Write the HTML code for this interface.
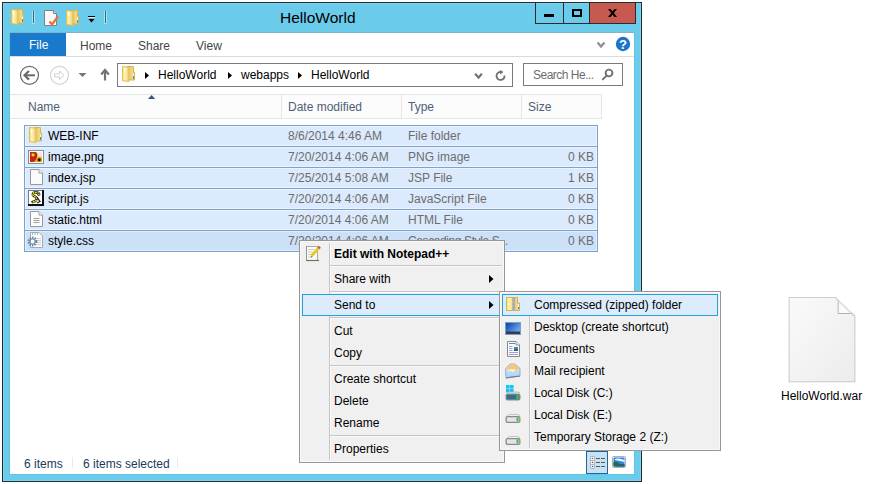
<!DOCTYPE html>
<html><head><meta charset="utf-8">
<style>
*{margin:0;padding:0;box-sizing:border-box}
html,body{width:878px;height:484px;background:#fff;overflow:hidden;font-family:"Liberation Sans",sans-serif;font-size:12px;color:#000}
.a{position:absolute}
.t{position:absolute;white-space:nowrap;line-height:14px}
#win{left:2px;top:2px;width:640px;height:480px;background:#6bcbea;border:1px solid #2b2b2b}
#content{left:10px;top:33px;width:624px;height:441px;background:#fff}
</style></head>
<body>
<svg width="0" height="0" style="position:absolute">
<defs>
<linearGradient id="gfront" x1="0" y1="0" x2="1" y2="0"><stop offset="0" stop-color="#f2da78"/><stop offset="0.35" stop-color="#fff4bc"/><stop offset="1" stop-color="#ecce68"/></linearGradient>
<linearGradient id="gback" x1="0" y1="0" x2="1" y2="0"><stop offset="0" stop-color="#e2c262"/><stop offset="1" stop-color="#f6e294"/></linearGradient>

</defs></svg>
<div id="win" class="a"></div>
<div class="a" style="left:3px;top:3px;width:638px;height:478px;border:1px solid #74d6f6"></div>
<div class="a" style="left:9px;top:32px;width:626px;height:443px;border:1px solid #5ec5e8"></div>
<div id="content" class="a"></div>
<div class="a" style="left:10px;top:32px;width:624px;height:1px;background:#7fb4cc"></div>

<!-- caption buttons -->
<div class="a" style="left:535px;top:3px;width:1px;height:21px;background:#2b2b2b"></div>
<div class="a" style="left:535px;top:23px;width:101px;height:1px;background:#2b2b2b"></div>
<div class="a" style="left:563px;top:3px;width:1px;height:21px;background:#2b2b2b"></div>
<div class="a" style="left:589px;top:3px;width:1px;height:21px;background:#2b2b2b"></div>
<div class="a" style="left:590px;top:3px;width:45px;height:20px;background:#c75a50"></div>
<div class="a" style="left:544px;top:14px;width:10px;height:3px;background:#000"></div>
<div class="a" style="left:572px;top:9px;width:10px;height:8px;border:2px solid #000"></div>
<div class="a" style="left:635px;top:3px;width:1px;height:21px;background:#2b2b2b"></div>
<svg class="a" style="left:607px;top:8px" width="12" height="11" viewBox="0 0 12 11"><path d="M1 1 H3.6 L5.5 3.6 L7.4 1 H10 L6.8 5 L10 9 H7.4 L5.5 6.4 L3.6 9 H1 L4.2 5 Z" fill="#000"/></svg>

<!-- title -->
<div class="t" style="left:280px;top:9px;font-size:15.5px;line-height:17px">HelloWorld</div>

<!-- QAT -->
<svg class="a" style="left:11px;top:9px" width="13" height="16" viewBox="0 0 13 16">
<path d="M5 0.5 H11.5 V6 H12.5 V14 H5 Z" fill="url(#gback)" stroke="#deb448" stroke-width="1"/>
<rect x="11" y="8" width="1" height="2" fill="#fff"/>
<rect x="11" y="10" width="1" height="3" fill="#2f93dd"/>
<path d="M0.5 0.5 L7 1.2 V15.5 L0.5 14.6 Z" fill="url(#gfront)" stroke="#e3bd4e" stroke-width="1"/>
<rect x="2" y="2" width="1.3" height="4" fill="#fff" opacity="0.9"/>
</svg>
<div class="a" style="left:32px;top:11px;width:3px;height:13px;background:#a6e2f4;border-radius:1px"></div>
<div class="a" style="left:33px;top:11px;width:1px;height:12px;background:#3a6878"></div>
<svg class="a" style="left:44px;top:10px" width="16" height="16" viewBox="0 0 16 16">
<path d="M0.5 0.5 H9.5 L12.5 3.5 V15.5 H0.5 Z" fill="#f8f8f8" stroke="#808080"/>
<path d="M9.5 0.5 V3.5 H12.5" fill="#e0e0e0" stroke="#808080"/>
<path d="M5.5 11.5 L8 14.5 L14 6.5" fill="none" stroke="#e8703a" stroke-width="2.2"/>
</svg>
<svg class="a" style="left:66px;top:10px" width="13" height="16" viewBox="0 0 13 16">
<path d="M5 0.5 H11.5 V6 H12.5 V14 H5 Z" fill="url(#gback)" stroke="#deb448" stroke-width="1"/>
<rect x="11" y="8" width="1" height="2" fill="#fff"/>
<rect x="11" y="10" width="1" height="3" fill="#2f93dd"/>
<path d="M0.5 0.5 L7 1.2 V15.5 L0.5 14.6 Z" fill="url(#gfront)" stroke="#e3bd4e" stroke-width="1"/>
<rect x="2" y="2" width="1.3" height="4" fill="#fff" opacity="0.9"/>
</svg>
<div class="a" style="left:88px;top:16px;width:7px;height:1px;background:#000"></div>
<div class="a" style="left:88px;top:17px;width:7px;height:1px;background:#bdeefd"></div>
<svg class="a" style="left:88px;top:19px" width="7" height="5" viewBox="0 0 7 5"><path d="M0.5 0 H6.5 L3.5 3.5 Z" fill="#000"/></svg>
<div class="a" style="left:104px;top:11px;width:3px;height:13px;background:#a6e2f4;border-radius:1px"></div>
<div class="a" style="left:105px;top:11px;width:1px;height:12px;background:#3a6878"></div>

<!-- ribbon tabs -->
<div class="a" style="left:10px;top:33px;width:56px;height:23px;background:#1979ca"></div>
<div class="t" style="left:29px;top:38px;color:#fff">File</div>
<div class="t" style="left:80px;top:39px;color:#444">Home</div>
<div class="t" style="left:138px;top:39px;color:#444">Share</div>
<div class="t" style="left:196px;top:39px;color:#444">View</div>
<div class="a" style="left:10px;top:56px;width:624px;height:1px;background:#dadbdc"></div>
<svg class="a" style="left:596px;top:41px" width="10" height="8" viewBox="0 0 10 8"><path d="M1.5 1.5 L5 5.5 L8.5 1.5" fill="none" stroke="#8e8e8e" stroke-width="2.2"/></svg>
<svg class="a" style="left:615px;top:36px" width="16" height="16" viewBox="0 0 16 16"><circle cx="8" cy="8" r="7.2" fill="#1a76c9"/><text x="8" y="12.6" text-anchor="middle" font-family="Liberation Sans" font-weight="bold" font-size="13" fill="#fff">?</text></svg>

<!-- nav -->
<svg class="a" style="left:19px;top:65px" width="21" height="21" viewBox="0 0 21 21"><circle cx="10.5" cy="10.3" r="9" fill="#fff" stroke="#6a6a6a" stroke-width="1.2"/><path d="M7 10.3 H16" stroke="#6a6a6a" stroke-width="2"/><path d="M10 6 L5.5 10.3 L10 14.6" fill="none" stroke="#6a6a6a" stroke-width="2.2"/></svg>
<svg class="a" style="left:49px;top:65px" width="21" height="21" viewBox="0 0 21 21"><circle cx="10.5" cy="10.3" r="9" fill="#fff" stroke="#d4d4d4" stroke-width="1.2"/><path d="M5.5 8.8 H10.5 V6 L15 10.3 L10.5 14.6 V11.8 H5.5 Z" fill="none" stroke="#d0d0d0" stroke-width="1"/></svg>
<svg class="a" style="left:78px;top:72px" width="9" height="6" viewBox="0 0 9 6"><path d="M0.5 1 H8.5 L4.5 5 Z" fill="#747474"/></svg>
<svg class="a" style="left:100px;top:68px" width="10" height="14" viewBox="0 0 10 14"><path d="M5 12.5 V2.5" stroke="#747474" stroke-width="2.2"/><path d="M1.2 6.5 L5 2 L8.8 6.5" fill="none" stroke="#747474" stroke-width="2.2"/></svg>
<div class="a" style="left:10px;top:94px;width:592px;height:1px;background:#e5e5e5"></div>

<!-- address -->
<div class="a" style="left:117px;top:63px;width:396px;height:24px;border:1px solid #7a7a7a;background:#fff"></div>
<svg class="a" style="left:122px;top:66px" width="13" height="16" viewBox="0 0 13 16">
<path d="M5 0.5 H11.5 V6 H12.5 V14 H5 Z" fill="url(#gback)" stroke="#deb448" stroke-width="1"/>
<rect x="11" y="8" width="1" height="2" fill="#fff"/>
<rect x="11" y="10" width="1" height="3" fill="#2f93dd"/>
<path d="M0.5 0.5 L7 1.2 V15.5 L0.5 14.6 Z" fill="url(#gfront)" stroke="#e3bd4e" stroke-width="1"/>
<rect x="2" y="2" width="1.3" height="4" fill="#fff" opacity="0.9"/>
</svg>
<svg class="a" style="left:145px;top:72px" width="5" height="7" viewBox="0 0 5 7"><path d="M0 0 L4 3.5 L0 7 Z" fill="#000"/></svg>
<div class="t" style="left:158px;top:68px">HelloWorld</div>
<svg class="a" style="left:228px;top:72px" width="5" height="7" viewBox="0 0 5 7"><path d="M0 0 L4 3.5 L0 7 Z" fill="#000"/></svg>
<div class="t" style="left:241px;top:68px">webapps</div>
<svg class="a" style="left:298px;top:72px" width="5" height="7" viewBox="0 0 5 7"><path d="M0 0 L4 3.5 L0 7 Z" fill="#000"/></svg>
<div class="t" style="left:311px;top:68px">HelloWorld</div>
<svg class="a" style="left:474px;top:72px" width="9" height="8" viewBox="0 0 9 8"><path d="M1.2 1.8 L4.5 5.6 L7.8 1.8" fill="none" stroke="#707070" stroke-width="2.2"/></svg>
<svg class="a" style="left:495px;top:70px" width="12" height="12" viewBox="0 0 12 12"><path d="M9.5 5.5 A4 4 0 1 1 6 2" fill="none" stroke="#707070" stroke-width="1.8"/><path d="M5 0 L8.5 2 L5 4.5 Z" fill="#707070"/></svg>
<div class="a" style="left:523px;top:63px;width:100px;height:23px;border:1px solid #7a7a7a;background:#fff"></div>
<div class="t" style="left:533px;top:68px;color:#6d6d6d;letter-spacing:-0.5px">Search He...</div>
<svg class="a" style="left:601px;top:68px" width="13" height="13" viewBox="0 0 13 13"><circle cx="8" cy="5" r="3.4" fill="none" stroke="#707070" stroke-width="1.9"/><path d="M5.6 7.6 L1.8 11.4" stroke="#707070" stroke-width="1.9" stroke-linecap="round"/></svg>

<!-- header -->
<div class="a" style="left:10px;top:95px;width:592px;height:24px;background:#fcfcfc"></div>
<div class="a" style="left:10px;top:118px;width:592px;height:1px;background:#e5e5e5"></div>
<div class="a" style="left:281px;top:95px;width:1px;height:23px;background:#e5e5e5"></div>
<div class="a" style="left:401px;top:95px;width:1px;height:23px;background:#e5e5e5"></div>
<div class="a" style="left:521px;top:95px;width:1px;height:23px;background:#e5e5e5"></div>
<div class="a" style="left:601px;top:95px;width:1px;height:23px;background:#e5e5e5"></div>
<svg class="a" style="left:148px;top:94px" width="8" height="6" viewBox="0 0 8 6"><path d="M0 5 L3.6 1 L7.2 5 Z" fill="#3c5478"/></svg>
<div class="t" style="left:28px;top:100px;color:#4c607a">Name</div>
<div class="t" style="left:288px;top:100px;color:#4c607a">Date modified</div>
<div class="t" style="left:408px;top:100px;color:#4c607a">Type</div>
<div class="t" style="left:528px;top:100px;color:#4c607a">Size</div>
<!-- rows -->
<div class="a" style="left:24px;top:125px;width:574px;height:22px;background:#dbeafc;border:1px solid #7da2ce;box-shadow:inset 0 0 0 1px rgba(255,255,255,0.45)"></div>
<div class="a" style="left:24px;top:146px;width:574px;height:22px;background:#dbeafc;border:1px solid #7da2ce;box-shadow:inset 0 0 0 1px rgba(255,255,255,0.45)"></div>
<div class="a" style="left:24px;top:167px;width:574px;height:22px;background:#dbeafc;border:1px solid #7da2ce;box-shadow:inset 0 0 0 1px rgba(255,255,255,0.45)"></div>
<div class="a" style="left:24px;top:188px;width:574px;height:22px;background:#dbeafc;border:1px solid #7da2ce;box-shadow:inset 0 0 0 1px rgba(255,255,255,0.45)"></div>
<div class="a" style="left:24px;top:209px;width:574px;height:22px;background:#dbeafc;border:1px solid #7da2ce;box-shadow:inset 0 0 0 1px rgba(255,255,255,0.45)"></div>
<div class="a" style="left:24px;top:230px;width:574px;height:22px;background:#cce0f8;border:1px solid #7da2ce;box-shadow:inset 0 0 0 1px rgba(255,255,255,0.45)"></div>
<svg class="a" style="left:29px;top:127px" width="13" height="16" viewBox="0 0 13 16">
<path d="M5 0.5 H11.5 V6 H12.5 V14 H5 Z" fill="url(#gback)" stroke="#deb448" stroke-width="1"/>
<rect x="11" y="8" width="1" height="2" fill="#fff"/>
<rect x="11" y="10" width="1" height="3" fill="#2f93dd"/>
<path d="M0.5 0.5 L7 1.2 V15.5 L0.5 14.6 Z" fill="url(#gfront)" stroke="#e3bd4e" stroke-width="1"/>
<rect x="2" y="2" width="1.3" height="4" fill="#fff" opacity="0.9"/>
</svg>
<div class="t" style="left:48px;top:129px">WEB-INF</div>
<div class="t" style="left:288px;top:129px;color:#6d6d6d">8/6/2014 4:46 AM</div>
<div class="t" style="left:408px;top:129px;color:#6d6d6d">File folder</div>
<svg class="a" style="left:28px;top:150px" width="16" height="14" viewBox="0 0 16 14"><rect x="0.5" y="0.5" width="15" height="13" fill="#fbfbfb" stroke="#8c8c8c"/><rect x="2" y="2" width="12" height="10" fill="#e6eedc"/><path d="M2 2 H8 L9.5 4.5 L9 9 L6 12 H2 Z" fill="#c42412"/><circle cx="5" cy="4.8" r="1.6" fill="#e0e020"/><path d="M7 12 L8.5 8 L11 6.5 L14 7 V12 Z" fill="#f2a20c"/><circle cx="11.2" cy="9.8" r="1.6" fill="#101010"/></svg>
<div class="t" style="left:48px;top:150px">image.png</div>
<div class="t" style="left:288px;top:150px;color:#6d6d6d">7/20/2014 4:06 AM</div>
<div class="t" style="left:408px;top:150px;color:#6d6d6d">PNG image</div>
<div class="t" style="left:494px;width:100px;text-align:right;top:150px;color:#6d6d6d">0 KB</div>
<svg class="a" style="left:30px;top:169px" width="13" height="16" viewBox="0 0 13 16"><path d="M0.5 0.5 H9 L12.5 4 V15.5 H0.5 Z" fill="#fbfbfb" stroke="#9a9a9a"/><path d="M9 0.5 V4 H12.5" fill="#fff" stroke="#9a9a9a"/></svg>
<div class="t" style="left:48px;top:171px">index.jsp</div>
<div class="t" style="left:288px;top:171px;color:#6d6d6d">7/25/2014 5:08 AM</div>
<div class="t" style="left:408px;top:171px;color:#6d6d6d">JSP File</div>
<div class="t" style="left:494px;width:100px;text-align:right;top:171px;color:#6d6d6d">1 KB</div>
<svg class="a" style="left:28px;top:190px" width="16" height="16" viewBox="0 0 16 16"><rect x="0" y="0" width="16" height="16" fill="#111"/><rect x="0" y="0" width="14" height="14" fill="#7a7a7a"/><rect x="1" y="1" width="13" height="13" fill="#fff"/><path d="M11 3.5 C8 1.5 4 2.5 5 5 C6 7 9.5 7 8.5 9.5 C7.5 12 5 11.5 3.5 12.5" fill="none" stroke="#222" stroke-width="2.6"/><path d="M11 3.5 C8 1.5 4 2.5 5 5 C6 7 9.5 7 8.5 9.5 C7.5 12 5 11.5 3.5 12.5" fill="none" stroke="#f4ec10" stroke-width="1.6" stroke-dasharray="1.6 0.8"/><path d="M9 7 L12 11.5 L9 13" fill="none" stroke="#222" stroke-width="1.3"/><circle cx="10.8" cy="4.3" r="1.2" fill="none" stroke="#222"/></svg>
<div class="t" style="left:48px;top:192px">script.js</div>
<div class="t" style="left:288px;top:192px;color:#6d6d6d">7/20/2014 4:06 AM</div>
<div class="t" style="left:408px;top:192px;color:#6d6d6d">JavaScript File</div>
<div class="t" style="left:494px;width:100px;text-align:right;top:192px;color:#6d6d6d">0 KB</div>
<svg class="a" style="left:30px;top:211px" width="13" height="16" viewBox="0 0 13 16"><path d="M0.5 0.5 H9 L12.5 4 V15.5 H0.5 Z" fill="#fbfbfb" stroke="#9a9a9a"/><path d="M9 0.5 V4 H12.5" fill="#fff" stroke="#9a9a9a"/><path d="M3.5 7.5 H9.5 M3.5 9.5 H9.5 M3.5 11.5 H9.5" stroke="#a0a0a0"/></svg>
<div class="t" style="left:48px;top:213px">static.html</div>
<div class="t" style="left:288px;top:213px;color:#6d6d6d">7/20/2014 4:06 AM</div>
<div class="t" style="left:408px;top:213px;color:#6d6d6d">HTML File</div>
<div class="t" style="left:494px;width:100px;text-align:right;top:213px;color:#6d6d6d">0 KB</div>
<svg class="a" style="left:27px;top:231px" width="17" height="18" viewBox="0 0 17 18"><path d="M3.5 1.5 H12 L15.5 5 V16.5 H3.5 Z" fill="#fbfbfb" stroke="#a8a8a8"/><path d="M5.5 2.5 V3.5 M8 2.5 V3.5 M10.5 2.5 V3.5" stroke="#5a7090" stroke-width="1"/><path d="M7.5 7.5 H14 M7.5 9.5 H14 M7.5 11.5 H14 M7.5 13.5 H14" stroke="#d0d0d0"/><circle cx="5.5" cy="10.5" r="3.6" fill="none" stroke="#6584a8" stroke-width="2.6" stroke-dasharray="1.4 0.9"/><circle cx="5.5" cy="10.5" r="2.6" fill="none" stroke="#7090b8" stroke-width="1"/><rect x="4.3" y="9.3" width="2.4" height="2.4" fill="#fff"/></svg>
<div class="t" style="left:48px;top:234px">style.css</div>
<div class="t" style="left:288px;top:234px;color:#6d6d6d">7/20/2014 4:06 AM</div>
<div class="t" style="left:408px;top:234px;color:#6d6d6d;letter-spacing:-0.4px">Cascading Style S...</div>
<div class="t" style="left:494px;width:100px;text-align:right;top:234px;color:#6d6d6d">0 KB</div>

<!-- status -->
<div class="t" style="left:24px;top:457px;color:#1e395b">6 items</div>
<div class="a" style="left:72px;top:457px;width:1px;height:11px;background:#e8e8e8"></div>
<div class="t" style="left:83px;top:457px;color:#1e395b">6 items selected</div>
<div class="a" style="left:177px;top:457px;width:1px;height:11px;background:#e8e8e8"></div>
<div class="a" style="left:586px;top:451px;width:22px;height:23px;background:#c6e2f6;border:1px solid #2d6290"></div>
<svg class="a" style="left:590px;top:456px" width="16" height="13" viewBox="0 0 16 13"><rect x="0.5" y="0.5" width="4" height="4" rx="0.8" fill="#fff" stroke="#9aa0a8" stroke-width="0.8"/><rect x="0.5" y="4.5" width="4" height="4" rx="0.8" fill="#fff" stroke="#9aa0a8" stroke-width="0.8"/><rect x="0.5" y="8.5" width="4" height="4" rx="0.8" fill="#fff" stroke="#9aa0a8" stroke-width="0.8"/><circle cx="2.5" cy="2.5" r="0.8" fill="#30a030"/><circle cx="2.5" cy="6.5" r="0.8" fill="#e02020"/><circle cx="2.5" cy="10.5" r="0.8" fill="#2050d0"/><path d="M6 2.5 H10 M11 2.5 H15 M6 6.5 H10 M11 6.5 H15 M6 10.5 H10 M11 10.5 H15" stroke="#5a5a5a" stroke-width="1"/></svg>
<svg class="a" style="left:612px;top:456px" width="14" height="12" viewBox="0 0 14 12"><rect x="0.5" y="0.5" width="13" height="11" rx="1" fill="#fff" stroke="#a8b0bc"/><rect x="1.5" y="1.5" width="11" height="9" fill="#2f86e0"/><path d="M3 3 Q7 1.5 12.5 4 V6 Q8 5 3 4 Z" fill="#eef8ff"/><path d="M1.5 6 Q5 5 8 8 L12.5 8 V10.5 H1.5 Z" fill="#2a6a3a"/><path d="M6 9 H12.5 V10.5 H4 Z" fill="#1a5ab0"/></svg>

<!-- desktop war file -->
<svg class="a" style="left:786px;top:295px" width="72" height="90" viewBox="0 0 72 90">
<defs><linearGradient id="gpage" x1="0" y1="0" x2="1" y2="1"><stop offset="0" stop-color="#fafafa"/><stop offset="1" stop-color="#ececec"/></linearGradient>
<filter id="blr" x="-10%" y="-10%" width="120%" height="120%"><feGaussianBlur stdDeviation="0.7"/></filter></defs>
<path d="M3.5 3 H49.5 L68.5 21 V86.5 H3.5 Z" fill="none" stroke="#bdbdbd" stroke-width="1.6" filter="url(#blr)"/>
<path d="M3.5 3 H49.5 L68.5 21 V86.5 H3.5 Z" fill="url(#gpage)"/>
<path d="M52.5 5.5 V18 H65.5" fill="none" stroke="#9a9a9a" stroke-width="1.4" filter="url(#blr)"/>
<path d="M52.5 5 V18 H66 Z" fill="#fbfbfb"/>
<path d="M50 3.5 L67.5 21" stroke="#d0d0d0" stroke-width="1"/>
</svg>
<div class="t" style="left:781px;top:389px">HelloWorld.war</div>

<!-- context menu -->
<div class="a" style="left:299px;top:240px;width:206px;height:223px;background:#f0f0f0;border:1px solid #979797"></div>
<div class="a" style="left:300px;top:241px;width:204px;height:221px;border:1px solid #f8f8f8"></div>
<div class="a" style="left:329px;top:243px;width:1px;height:217px;background:#c5c5c5"></div>
<div class="a" style="left:330px;top:243px;width:1px;height:217px;background:#fafafa"></div>
<div class="a" style="left:329px;top:265px;width:173px;height:1px;background:#c5c5c5"></div>
<div class="a" style="left:330px;top:266px;width:172px;height:1px;background:#fafafa"></div>
<div class="a" style="left:329px;top:291px;width:173px;height:1px;background:#c5c5c5"></div>
<div class="a" style="left:330px;top:292px;width:172px;height:1px;background:#fafafa"></div>
<div class="a" style="left:329px;top:317px;width:173px;height:1px;background:#c5c5c5"></div>
<div class="a" style="left:330px;top:318px;width:172px;height:1px;background:#fafafa"></div>
<div class="a" style="left:329px;top:365px;width:173px;height:1px;background:#c5c5c5"></div>
<div class="a" style="left:330px;top:366px;width:172px;height:1px;background:#fafafa"></div>
<div class="a" style="left:329px;top:435px;width:173px;height:1px;background:#c5c5c5"></div>
<div class="a" style="left:330px;top:436px;width:172px;height:1px;background:#fafafa"></div>
<div class="a" style="left:302px;top:294px;width:200px;height:22px;background:#dcecfc;border:1px solid #26a0da"></div>
<svg class="a" style="left:305px;top:245px" width="17" height="17" viewBox="0 0 17 17"><path d="M1.5 1.5 H12.5 V15.5 H1.5 Z" fill="#fafaf6" stroke="#a8a8a8"/><path d="M1 15.5 H14" stroke="#707070" stroke-width="1.2"/><path d="M1.5 1 V15.5" stroke="#8a9a8a"/><path d="M3 4.5 H9 M3 7 H8 M3 9.5 H7 M3 12 H7" stroke="#c8ccd0"/><path d="M6.5 11 L14 2.5" stroke="#e8c820" stroke-width="2.8"/><path d="M6.5 11 L5.5 12.5 L7.5 12 Z" fill="#705030"/><path d="M13.2 1.6 L15.2 3.4" stroke="#b05858" stroke-width="2"/></svg>
<div class="t" style="left:334px;top:247px;font-weight:bold">Edit with Notepad++</div>
<div class="t" style="left:334px;top:272px">Share with</div>
<svg class="a" style="left:489px;top:275px" width="5" height="8" viewBox="0 0 5 8"><path d="M0 0 L4.5 4 L0 8 Z" fill="#000"/></svg>
<div class="t" style="left:334px;top:298px">Send to</div>
<svg class="a" style="left:489px;top:301px" width="5" height="8" viewBox="0 0 5 8"><path d="M0 0 L4.5 4 L0 8 Z" fill="#000"/></svg>
<div class="t" style="left:334px;top:324px">Cut</div>
<div class="t" style="left:334px;top:346px">Copy</div>
<div class="t" style="left:334px;top:372px">Create shortcut</div>
<div class="t" style="left:334px;top:394px">Delete</div>
<div class="t" style="left:334px;top:416px">Rename</div>
<div class="t" style="left:334px;top:442px">Properties</div>

<!-- submenu -->
<div class="a" style="left:499px;top:291px;width:222px;height:160px;background:#f0f0f0;border:1px solid #979797"></div>
<div class="a" style="left:500px;top:292px;width:220px;height:158px;border:1px solid #f8f8f8"></div>
<div class="a" style="left:529px;top:316px;width:1px;height:132px;background:#c5c5c5"></div>
<div class="a" style="left:530px;top:316px;width:1px;height:132px;background:#fafafa"></div>
<div class="a" style="left:502px;top:294px;width:216px;height:22px;background:#dcecfc;border:1px solid #26a0da"></div>
<svg class="a" style="left:506px;top:297px" width="15" height="15" viewBox="0 0 15 15"><path d="M6 0.5 H11.5 V6 H13.5 V13.5 H6 Z" fill="url(#gback)" stroke="#d8b04a"/><rect x="12" y="7" width="1" height="3" fill="#fff"/><rect x="12" y="10" width="1" height="2" fill="#2f93dd"/><path d="M0.5 0.5 H8 V13.5 H0.5 Z" fill="url(#gfront)" stroke="#d8b04c"/><rect x="6.5" y="1" width="2.5" height="12" fill="#7080a8"/><path d="M6.5 2 H9 M6.5 4 H9 M6.5 6 H9 M6.5 8 H9 M6.5 10 H9 M6.5 12 H9" stroke="#e8ecf8" stroke-width="0.8"/><rect x="7.2" y="5" width="1.2" height="1.2" fill="#f0c040"/></svg>
<svg class="a" style="left:505px;top:322px" width="16" height="13" viewBox="0 0 16 13"><defs><linearGradient id="gscr" x1="0" y1="0" x2="1" y2="0.6"><stop offset="0" stop-color="#0b3ea8"/><stop offset="1" stop-color="#6aa6ec"/></linearGradient></defs><rect x="0" y="0" width="16" height="13" fill="#7e9cc8"/><rect x="1" y="1" width="14" height="9" fill="url(#gscr)"/><rect x="1" y="9.5" width="14" height="2.5" fill="#343c54"/></svg>
<svg class="a" style="left:507px;top:341px" width="13" height="16" viewBox="0 0 13 16"><path d="M0.5 0.5 H9 L12.5 4 V15.5 H0.5 Z" fill="#fbfbfb" stroke="#8a8a8a"/><path d="M9 0.5 V4 H12.5" fill="#fff" stroke="#8a8a8a"/><path d="M2 2.5 H8" stroke="#3a9aa8"/><path d="M2 5.5 H5.5 M2 7.5 H5.5 M2 9.5 H5.5 M2 11.5 H11 M2 13.5 H11" stroke="#9aa0d0"/><rect x="7" y="6" width="4" height="4" fill="#3a80c8"/><rect x="7" y="8.5" width="4" height="1.5" fill="#2a6040"/></svg>
<svg class="a" style="left:505px;top:363px" width="16" height="16" viewBox="0 0 16 16"><defs><linearGradient id="genv" x1="0" y1="0" x2="0" y2="1"><stop offset="0" stop-color="#d8f4fc"/><stop offset="1" stop-color="#a8d0f0"/></linearGradient></defs><path d="M0.5 6 L5 1 H10 L15 5.5 V13 L1 15 Z" fill="url(#genv)" stroke="#8c98c8" stroke-width="0.8"/><path d="M1.5 6 Q5 0.5 10 1 L14.5 5.5 L8 9.5 Z" fill="#f6c67a"/><path d="M2.5 6.5 H11 L8 9 Z" fill="#fffbf0"/><path d="M1 14.5 L7 9 L15 13" fill="none" stroke="#b8d8f0" stroke-width="0.8"/><path d="M1 15 L15 13" stroke="#7078a8" stroke-width="1.2"/></svg>
<svg class="a" style="left:505px;top:384px" width="17" height="17" viewBox="0 0 17 17"><rect x="1" y="1" width="3.6" height="3.6" fill="#12c6f6"/><rect x="5" y="1" width="3.6" height="3.6" fill="#12c6f6"/><rect x="1" y="5" width="3.6" height="3.6" fill="#12c6f6"/><rect x="5" y="5" width="3.6" height="3.6" fill="#12c6f6"/><path d="M2 9 Q3 8 5 8 H12 Q14 8 15 9" fill="#e0e0e0" stroke="#b0b0b0" stroke-width="0.8"/><rect x="0.5" y="9.5" width="15" height="7" rx="2" fill="#8a8a8a"/><rect x="1.8" y="10.8" width="12.4" height="4.4" rx="0.8" fill="#2e6f92"/><rect x="11.5" y="11" width="2" height="4" fill="#38d038"/></svg>
<svg class="a" style="left:505px;top:414px" width="17" height="10" viewBox="0 0 17 10"><path d="M2 2 Q3 0.5 5 0.5 H12 Q14 0.5 15 2" fill="#f0f0f0" stroke="#b8b8b8" stroke-width="0.8"/><rect x="0.5" y="2" width="15" height="7" rx="2" fill="#8a8a8a"/><rect x="1.8" y="3.2" width="12.4" height="4.6" rx="0.8" fill="#e4e4ee"/><rect x="11.5" y="3.4" width="2" height="4" fill="#38c038"/></svg>
<svg class="a" style="left:505px;top:436px" width="17" height="10" viewBox="0 0 17 10"><path d="M2 2 Q3 0.5 5 0.5 H12 Q14 0.5 15 2" fill="#f0f0f0" stroke="#b8b8b8" stroke-width="0.8"/><rect x="0.5" y="2" width="15" height="7" rx="2" fill="#8a8a8a"/><rect x="1.8" y="3.2" width="12.4" height="4.6" rx="0.8" fill="#e4e4ee"/><rect x="11.5" y="3.4" width="2" height="4" fill="#38c038"/></svg>
<div class="t" style="left:534px;top:298px">Compressed (zipped) folder</div>
<div class="t" style="left:534px;top:320px">Desktop (create shortcut)</div>
<div class="t" style="left:534px;top:342px">Documents</div>
<div class="t" style="left:534px;top:364px">Mail recipient</div>
<div class="t" style="left:534px;top:386px">Local Disk (C:)</div>
<div class="t" style="left:534px;top:408px">Local Disk (E:)</div>
<div class="t" style="left:534px;top:430px">Temporary Storage 2 (Z:)</div>

</body></html>
